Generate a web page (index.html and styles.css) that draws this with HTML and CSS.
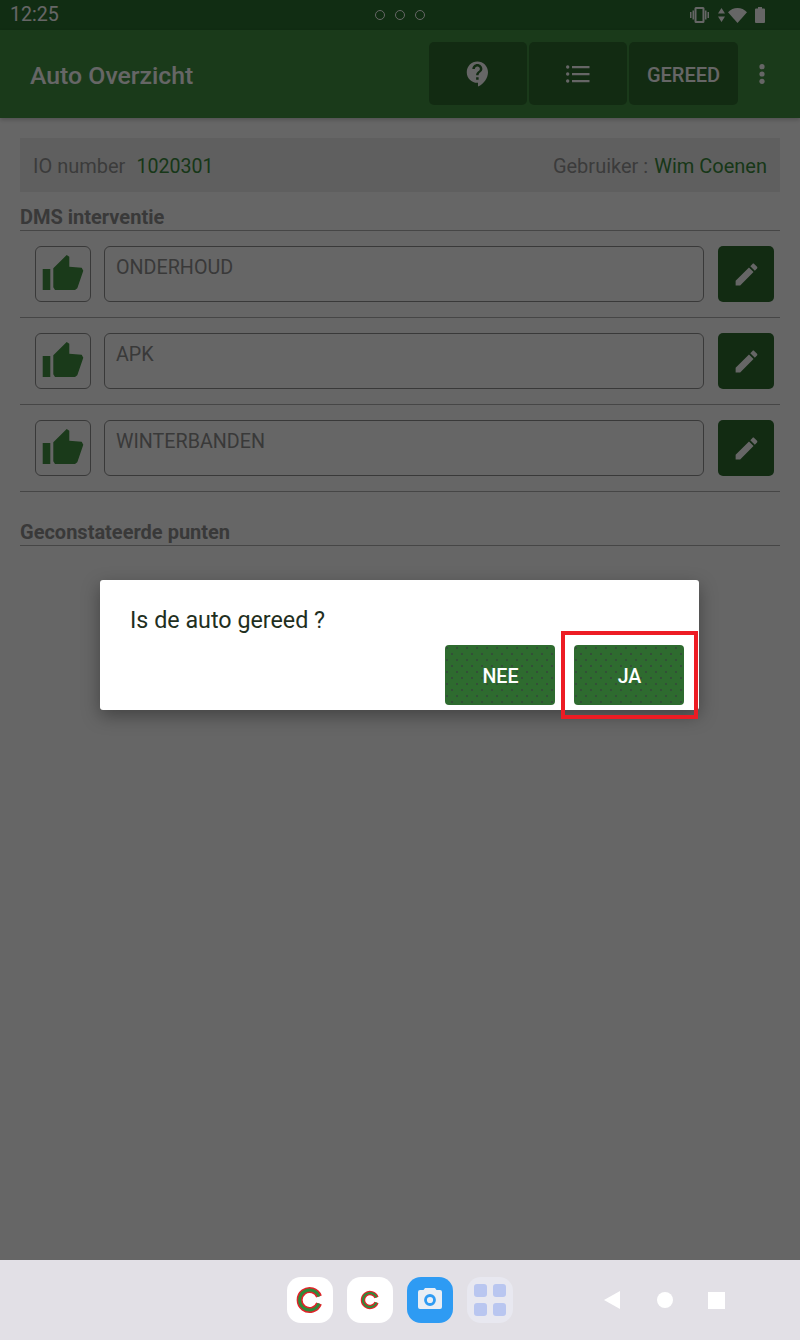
FILE: index.html
```html
<!DOCTYPE html>
<html lang="nl">
<head>
<meta charset="utf-8">
<title>Auto Overzicht</title>
<link rel="stylesheet" href="styles.css">
</head>
<body>
<div class="screen">
  <div class="app">
    <div class="statusbar">
      <span class="clock">12:25</span>
      <div class="sim-dots"><i></i><i></i><i></i></div>
      <div class="status-icons">
        <svg class="st-vib" width="19" height="16" viewBox="0 0 19 16"><path d="M6 0h7a1.500 1.500 0 0 1 1.500 1.500v13A1.500 1.500 0 0 1 13 16H6a1.500 1.500 0 0 1-1.500-1.500v-13A1.500 1.500 0 0 1 6 0zm.5 2v12h6V2z"/><path d="M0 5h1.500v6H0zM2.500 3.500H4v9H2.500zM15 3.500h1.500v9H15zM17.500 5H19v6h-1.500z"/></svg>
        <svg class="st-arrows" width="7" height="14" viewBox="0 0 7 14"><path d="M3.500 0L7 5.500H0zM3.500 14L0 8.500h7z"/></svg>
        <svg class="st-wifi" width="19" height="15" viewBox="0 0 19 15"><path d="M9.500 15L0 4.200C2.600 1.600 5.900 0 9.500 0S16.400 1.600 19 4.200z"/></svg>
        <svg class="st-batt" width="10" height="16" viewBox="0 0 10 16"><path d="M3 0h4v1.500h2a1 1 0 0 1 1 1V15a1 1 0 0 1-1 1H1a1 1 0 0 1-1-1V2.500a1 1 0 0 1 1-1h2z"/></svg>
      </div>
    </div>
    <header class="appbar">
      <h1 class="title">Auto Overzicht</h1>
      <div class="actions">
        <button class="tool tool-icon">
          <svg width="30" height="30" viewBox="0 0 24 24"><path d="M11.500 2C6.810 2 3 5.810 3 10.500S6.810 19 11.500 19h.5v3c4.860-2.340 8-7 8-11.500C20 5.810 16.190 2 11.500 2zm1 14.500h-2v-2h2v2zm0-3.500h-2c0-3.250 3-3 3-5 0-1.100-.9-2-2-2s-2 .9-2 2h-2c0-2.210 1.790-4 4-4s4 1.790 4 4c0 2.500-3 2.750-3 5z"/></svg>
        </button>
        <button class="tool tool-icon">
          <svg width="24" height="18" viewBox="0 0 24 18"><circle cx="1.700" cy="2" r="1.700"/><circle cx="1.700" cy="9" r="1.700"/><circle cx="1.700" cy="16" r="1.700"/><path d="M6 .9h17.500v2.300H6zM6 7.900h17.500v2.300H6zM6 14.900h17.500v2.300H6z"/></svg>
        </button>
        <button class="tool tool-text">GEREED</button>
      </div>
      <svg class="more" width="6" height="20" viewBox="0 0 6 20"><circle cx="3" cy="2.700" r="2.600"/><circle cx="3" cy="10" r="2.600"/><circle cx="3" cy="17.300" r="2.600"/></svg>
    </header>
    <main class="content">
      <div class="info">
        <div><span class="label">IO number</span><span class="value io">1020301</span></div>
        <div><span class="label label-user">Gebruiker :</span><span class="value">Wim Coenen</span></div>
      </div>
      <h2 class="section">DMS interventie</h2>
      <div class="row">
        <button class="thumb"><svg width="54" height="54" viewBox="1 1 54 54"><use href="#thumb-shape"/></svg></button>
        <div class="field">ONDERHOUD</div>
        <button class="edit"><svg width="29" height="29" viewBox="0 0 24 24"><use href="#edit-shape"/></svg></button>
      </div>
      <div class="row">
        <button class="thumb"><svg width="54" height="54" viewBox="1 1 54 54"><use href="#thumb-shape"/></svg></button>
        <div class="field">APK</div>
        <button class="edit"><svg width="29" height="29" viewBox="0 0 24 24"><use href="#edit-shape"/></svg></button>
      </div>
      <div class="row">
        <button class="thumb"><svg width="54" height="54" viewBox="1 1 54 54"><use href="#thumb-shape"/></svg></button>
        <div class="field">WINTERBANDEN</div>
        <button class="edit"><svg width="29" height="29" viewBox="0 0 24 24"><use href="#edit-shape"/></svg></button>
      </div>
      <h2 class="section section-second">Geconstateerde punten</h2>
    </main>
    <div class="scrim">
      <div class="dialog">
        <p class="question">Is de auto gereed ?</p>
        <div class="dialog-actions">
          <button class="dlg-btn">NEE</button>
          <div class="ja-wrap">
            <button class="dlg-btn">JA</button>
            <div class="highlight"></div>
          </div>
        </div>
      </div>
    </div>
  </div>
  <nav class="dock">
    <div class="apps">
      <div class="app-icon tile-white">
        <svg width="46" height="46" viewBox="0 0 46 46"><path class="c-red" d="M32 19.500A10 10 0 1 0 32 26.500" stroke-width="6"/><path class="c-green" d="M32 19.500A10 10 0 1 0 32 26.500" stroke-width="3"/></svg>
      </div>
      <div class="app-icon tile-white">
        <svg width="46" height="46" viewBox="0 0 46 46"><path class="c-red" d="M29.500 20.500A7 7 0 1 0 29.500 25.500" stroke-width="4.400"/><path class="c-green" d="M29.500 20.500A7 7 0 1 0 29.500 25.500" stroke-width="2"/></svg>
      </div>
      <div class="app-icon tile-blue">
        <svg width="46" height="46" viewBox="0 0 46 46"><path class="cam-body" d="M11 15a2 2 0 0 1 2-2h3.500l1.500-2h10l1.500 2H33a2 2 0 0 1 2 2v15a2 2 0 0 1-2 2H13a2 2 0 0 1-2-2z"/><circle class="cam-lens" cx="23" cy="23" r="4.500"/></svg>
      </div>
      <div class="app-icon tile-grid">
        <i></i><i></i><i></i><i></i>
      </div>
    </div>
    <div class="navkeys">
      <svg width="16" height="18" viewBox="0 0 16 18"><path d="M0 9L16 0v18z"/></svg>
      <svg class="nav-home" width="16" height="16" viewBox="0 0 16 16"><circle cx="8" cy="8" r="8"/></svg>
      <svg width="17" height="17" viewBox="0 0 17 17"><path d="M0 0h17v17H0z"/></svg>
    </div>
  </nav>
</div>
<svg class="defs" width="0" height="0">
  <defs>
    <g id="thumb-shape"><path d="M7.700 23h7.600v21H7.700zM18.300 22.300L31.700 9l2.600 1.700v10l12.400 1 1.600 3-6 17.600L40 44H20l-1.700-2.700z"/></g>
    <path id="edit-shape" d="M3 17.250V21h3.750L17.810 9.940l-3.750-3.750L3 17.250zM20.710 7.040c.39-.39.39-1.020 0-1.410l-2.340-2.340c-.39-.39-1.020-.39-1.410 0l-1.830 1.830 3.750 3.750 1.830-1.830z"/>
  </defs>
</svg>
</body>
</html>
```
FILE: styles.css
```css
* { box-sizing: border-box; }
html, body { margin: 0; padding: 0; }
body { font-family: Roboto, "Liberation Sans", sans-serif; background: #fff; }
button { font-family: inherit; border: 0; padding: 0; margin: 0; }
.screen { width: 800px; height: 1340px; overflow: hidden; display: flex; flex-direction: column; }
.app { position: relative; height: 1260px; background: #fff; flex: none; }
.defs { position: absolute; }

.statusbar { height: 30px; background: #2b7030; display: grid; grid-template-columns: 1fr auto 1fr; align-items: center; padding: 0 10px; color: #fff; }
.clock { font-size: 19.600px; line-height: 30px; }
.sim-dots { display: flex; gap: 10px; }
.sim-dots i { width: 10px; height: 10px; border: 1px solid #fff; border-radius: 50%; display: block; }
.status-icons { display: flex; align-items: center; justify-content: flex-end; fill: #fff; margin-right: 25px; }
.st-arrows { margin-left: 9px; }
.st-wifi { margin-left: 3px; }
.st-batt { margin-left: 8px; }

.appbar { height: 88px; background: #419141; display: flex; align-items: center; padding: 0 35px 0 30px; box-shadow: 0 2px 4px rgba(0,0,0,.2); position: relative; }
.title { margin: 0; padding-top: 2px; font-size: 24.800px; font-weight: 500; color: #fff; flex: 1; }
.actions { display: flex; gap: 2px; align-self: flex-start; margin-top: 12px; }
.tool { height: 63px; background: #2e6b2f; border-radius: 5px; color: #fff; display: flex; align-items: center; justify-content: center; fill: #fff; }
.tool-icon { width: 98px; }
.tool-text { width: 109px; font-size: 20px; font-weight: 500; padding-top: 3px; }
.more { fill: #fff; margin-left: 21px; }

.content { padding: 20px 20px 0; }
.info { height: 54px; background: #eeeeee; display: flex; justify-content: space-between; align-items: center; padding: 2px 13px 0; font-size: 20px; }
.label { color: #959595; }
.label-user { margin-right: 6px; }
.value { color: #3a8a3c; }
.io { margin-left: 11px; font-size: 19.600px; }
.section { margin: 0; font-size: 20px; font-weight: 700; color: #8f8f8f; height: 39px; padding-top: 15px; line-height: 21px; border-bottom: 1px solid #b0b0b0; }
.section-second { margin-top: 25px; height: 29px; padding-top: 5px; }
.row { height: 87px; display: flex; align-items: center; gap: 13px; padding: 0 6px 0 15px; border-bottom: 1px solid #b0b0b0; }
.thumb { width: 56px; height: 56px; background: none; border: 1px solid #8f8f8f; border-radius: 6px; fill: #419141; display: block; }
.thumb svg { display: block; }
.field { width: 600px; height: 56px; border: 1px solid #8f8f8f; border-radius: 6px; padding: 9px 11px; font-size: 19.700px; line-height: 24px; color: #8f8f8f; }
.edit { width: 56px; height: 56px; margin-left: 1px; background: #2e6b2f; border-radius: 5px; fill: #fff; display: flex; align-items: center; justify-content: center; }

.scrim { position: absolute; inset: 0; background: rgba(0,0,0,.6); padding: 580px 0 0 100px; }
.dialog { width: 599px; height: 130px; background: #fff; border-radius: 3px; box-shadow: 0 6px 18px rgba(0,0,0,.35); padding: 27px 15px 5px 30px; display: flex; flex-direction: column; justify-content: space-between; }
.question { margin: 0; font-size: 23.300px; line-height: 26px; color: #1f2f21; }
.dialog-actions { display: flex; justify-content: flex-end; gap: 19px; }
.dlg-btn { width: 110px; height: 60px; border-radius: 4px; color: #fff; font-size: 19.600px; font-weight: 500; display: block; padding: 2px 0 0 1px;
  background-color: #2e6b2f;
  background-image: radial-gradient(circle, rgba(60,30,70,.5) .6px, transparent 1px), radial-gradient(circle, rgba(60,30,70,.5) .6px, transparent 1px);
  background-size: 10px 12px; background-position: 2px 3px, 7px 9px; }
.ja-wrap { position: relative; }
.highlight { position: absolute; top: -14px; left: -13px; right: -14px; bottom: -14px; border: 4px solid #ed1c24; }

.dock { height: 80px; background: #e2e0e6; display: flex; align-items: center; padding-left: 287px; flex: none; }
.apps { display: flex; gap: 14px; }
.app-icon { width: 46px; height: 46px; border-radius: 14px; display: flex; align-items: center; justify-content: center; }
.tile-white { background: #fff; }
.tile-blue { background: #2e9bf3; }
.tile-grid { background: #e8e8f0; display: grid; grid-template-columns: 13px 13px; grid-template-rows: 13px 13px; gap: 6px; place-content: center; }
.tile-grid i { width: 13px; height: 13px; background: #b9c6f0; border-radius: 3px; display: block; }
.c-red { fill: none; stroke: #e0242a; }
.c-green { fill: none; stroke: #2e8b3a; }
.cam-body { fill: #e9eef4; }
.cam-lens { fill: #e9eef4; stroke: #2e9bf3; stroke-width: 2.800; }
.navkeys { display: flex; align-items: center; margin-left: 91px; gap: 36px; fill: #fff; }
.nav-home { margin: 0 -1px 0 1px; }
```
